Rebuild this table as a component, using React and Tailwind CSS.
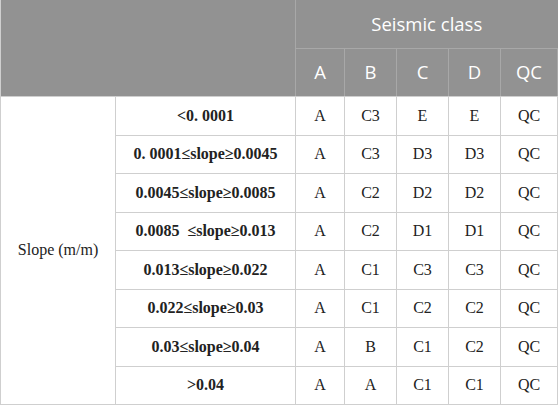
import React from "react";

const rows = [
  ["<0. 0001", "A", "C3", "E", "E", "QC"],
  ["0. 0001≤slope≥0.0045", "A", "C3", "D3", "D3", "QC"],
  ["0.0045≤slope≥0.0085", "A", "C2", "D2", "D2", "QC"],
  ["0.0085 \u00a0≤slope≥0.013", "A", "C2", "D1", "D1", "QC"],
  ["0.013≤slope≥0.022", "A", "C1", "C3", "C3", "QC"],
  ["0.022≤slope≥0.03", "A", "C1", "C2", "C2", "QC"],
  ["0.03≤slope≥0.04", "A", "B", "C1", "C2", "QC"],
  [">0.04", "A", "A", "C1", "C1", "QC"],
];
const heights = ["h-[39px]", "h-[38px]", "h-[39px]", "h-[38px]", "h-[39px]", "h-[38px]", "h-[39px]", "h-[38px]"];

export default function App() {
  return (
    <div className="w-[558px] h-[405px] bg-white overflow-hidden">
      <table className="w-[557px] border-collapse table-fixed text-[#222]">
        <colgroup>
          <col className="w-[115px]" />
          <col className="w-[180px]" />
          <col className="w-[49px]" />
          <col className="w-[52px]" />
          <col className="w-[52px]" />
          <col className="w-[52px]" />
          <col className="w-[57px]" />
        </colgroup>
        <thead className="bg-[#929292] text-white font-['Open_Sans',sans-serif] text-[18.5px]">
          <tr className="h-[48px]">
            <th colSpan={2} rowSpan={2} className="border-l border-l-[#cfcfcf] border-b border-b-[#cfcfcf]"></th>
            <th colSpan={5} className="font-normal border-l border-l-[#a8a8a8] border-b border-b-[#a8a8a8]">Seismic class</th>
          </tr>
          <tr className="h-[48px]">
            {["A", "B", "C", "D", "QC"].map((h, i) => (
              <th key={h} className={`font-normal border-b border-b-[#cfcfcf] border-l border-l-[#a8a8a8] ${i === 4 ? "border-r border-r-[#a8a8a8]" : ""}`}>{h}</th>
            ))}
          </tr>
        </thead>
        <tbody className="font-['Liberation_Serif',serif] text-[16px]">
          {rows.map((r, i) => (
            <tr key={i} className={heights[i]}>
              {i === 0 && (
                <td rowSpan={8} className="border border-[#cfcfcf] text-center">Slope (m/m)</td>
              )}
              <td className="border border-[#cfcfcf] text-center font-bold">{r[0]}</td>
              {r.slice(1).map((c, j) => (
                <td key={j} className="border border-[#cfcfcf] text-center">{c}</td>
              ))}
            </tr>
          ))}
        </tbody>
      </table>
    </div>
  );
}
